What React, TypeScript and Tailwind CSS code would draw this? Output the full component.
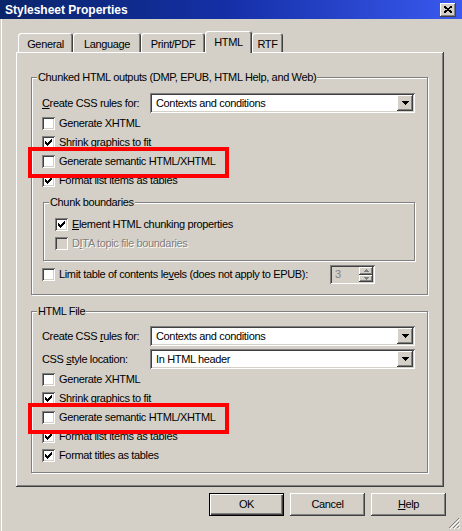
import React from "react";

const RAISED =
  "shadow-[inset_-1px_-1px_#404040,inset_1px_1px_#ffffff,inset_-2px_-2px_#808080]";
const SUNKEN =
  "shadow-[inset_1px_1px_#808080,inset_-1px_-1px_#ffffff,inset_2px_2px_#404040,inset_-2px_-2px_#d4d0c8]";
const ETCHED =
  "border border-[#808080] shadow-[inset_1px_1px_0_#ffffff,1px_1px_0_#ffffff]";

function Check({ checked, disabled }: { checked?: boolean; disabled?: boolean }) {
  return (
    <span
      className={
        "relative block h-[13px] w-[13px] shrink-0 " +
        (disabled ? "bg-[#d4d0c8] " : "bg-white ") +
        SUNKEN
      }
    >
      {checked && (
        <svg
          className="absolute left-0 top-0"
          width="13"
          height="13"
          viewBox="0 0 13 13"
          shapeRendering="crispEdges"
        >
          <path d="M3 5 L3 8 L5 10 L10 5 L10 2 L5 7 Z" fill="#000" />
        </svg>
      )}
    </span>
  );
}

function Row({
  checked,
  disabled,
  mark,
  children,
}: {
  checked?: boolean;
  disabled?: boolean;
  mark?: boolean;
  children: React.ReactNode;
}) {
  return (
    <div className="relative flex h-[19px] items-center gap-[4px]">
      <Check checked={checked} disabled={disabled} />
      <span
        className={
          disabled ? "text-[#808080] [text-shadow:1px_1px_0_#ffffff]" : ""
        }
      >
        {children}
      </span>
      {mark && (
        <div className="pointer-events-none absolute left-[-14px] top-[-5px] z-10 h-[31px] w-[201px] border-[4px] border-[#ff0000]" />
      )}
    </div>
  );
}

function Combo({ value }: { value: string }) {
  return (
    <div className={"flex h-[20px] w-[265px] items-center bg-white " + SUNKEN}>
      <span className="flex-1 pl-[6px]">{value}</span>
      <div
        className={
          "mr-[2px] flex h-[16px] w-[16px] items-center justify-center bg-[#d4d0c8] " +
          RAISED
        }
      >
        <svg width="7" height="4" viewBox="0 0 7 4" shapeRendering="crispEdges">
          <path d="M0 0 H7 L3.5 4 Z" fill="#000" />
        </svg>
      </div>
    </div>
  );
}

function U({ children }: { children: React.ReactNode }) {
  return <span className="underline underline-offset-[1px]">{children}</span>;
}

function Tab({
  label,
  w,
  selected,
}: {
  label: string;
  w: string;
  selected?: boolean;
}) {
  return (
    <div
      className={
        (selected
          ? "relative z-10 -mb-[1px] h-[22px] pt-[5px] "
          : "h-[19px] pt-[5px] ") +
        w +
        " flex items-start justify-center rounded-t-[3px] bg-[#d4d0c8] leading-[12px] shadow-[inset_1px_1px_#ffffff,inset_-1px_0_#404040,inset_-2px_0_#808080]"
      }
    >
      {label}
    </div>
  );
}

function Btn({
  children,
  def,
}: {
  children: React.ReactNode;
  def?: boolean;
}) {
  return (
    <div
      className={
        "flex h-[23px] w-[75px] items-center justify-center bg-[#d4d0c8] " +
        (def
          ? "shadow-[inset_0_0_0_1px_#000000,inset_2px_2px_#ffffff,inset_-2px_-2px_#404040,inset_-3px_-3px_#808080]"
          : RAISED)
      }
    >
      {children}
    </div>
  );
}

export default function App() {
  return (
    <div className="relative h-[531px] w-[462px] overflow-hidden bg-[#d4d0c8] font-['Liberation_Sans',Arial,sans-serif] text-[11px] tracking-[-0.35px] text-black shadow-[inset_1px_0_#d4d0c8,inset_2px_0_#ffffff]">
      {/* Title bar */}
      <div className="flex h-[19px] items-center justify-between bg-linear-to-r from-[#0a246a] via-[#1530a8] to-[#3a5af0] pl-[5px] pr-[6px]">
        <span className="text-[12px] font-bold tracking-normal text-white">
          Stylesheet Properties
        </span>
        <div
          className={
            "flex h-[14px] w-[16px] items-center justify-center bg-[#d4d0c8] " +
            RAISED
          }
        >
          <svg width="8" height="7" viewBox="0 0 8 7" shapeRendering="crispEdges">
            <path d="M0 0 L8 7 M8 0 L0 7" stroke="#000" strokeWidth="1.8" />
          </svg>
        </div>
      </div>

      {/* Tabs */}
      <div className="ml-[18px] mt-[12px] flex h-[21px] items-end">
        <Tab label="General" w="w-[55px]" />
        <Tab label="Language" w="w-[68px]" />
        <Tab label="Print/PDF" w="w-[64px]" />
        <Tab label="HTML" w="w-[47px]" selected />
        <Tab label="RTF" w="w-[31px]" />
      </div>

      {/* Tab page */}
      <div className={"ml-[16px] h-[435px] w-[428px] pl-[15px] pt-[25px] " + RAISED}>
        {/* Group 1 */}
        <div className={"relative w-[397px] pb-[10px] pl-[10px] pt-[15px] " + ETCHED}>
          <span className="absolute left-[5px] top-[-7px] bg-[#d4d0c8] px-[1px] leading-[12px]">
            Chunked HTML outputs (DMP, EPUB, HTML Help, and Web)
          </span>
          <div className="flex h-[20px] items-center">
            <span className="w-[108px]">
              <U>C</U>reate CSS rules for:
            </span>
            <Combo value="Contexts and conditions" />
          </div>
          <div className="mt-[1px]">
            <Row>Generate XHTML</Row>
            <Row checked>Shrink graphics to fit</Row>
            <Row mark>Generate semantic HTML/XHTML</Row>
            <Row checked>Format list items as tables</Row>
          </div>

          {/* Chunk boundaries */}
          <div className={"relative ml-[1px] mt-[12px] w-[372px] pb-[7px] pl-[11px] pt-[12px] " + ETCHED}>
            <span className="absolute left-[5px] top-[-7px] bg-[#d4d0c8] px-[1px] leading-[12px]">
              Chunk boundaries
            </span>
            <Row checked>
              <U>E</U>lement HTML chunking properties
            </Row>
            <Row disabled>
              D<U>I</U>TA topic file boundaries
            </Row>
          </div>

          <div className="mt-[3px] flex h-[20px] items-center">
            <Check />
            <span className="ml-[4px] w-[271px]">
              Limit table of contents le<U>v</U>els (does not apply to EPUB):
            </span>
            <div className={"flex h-[19px] w-[45px] items-center bg-[#d4d0c8] " + SUNKEN}>
              <span className="flex-1 pl-[5px] text-[#808080]">3</span>
              <div className="mr-[2px] flex flex-col">
                <div className={"flex h-[8px] w-[14px] items-center justify-center " + RAISED}>
                  <svg width="5" height="3" viewBox="0 0 5 3" shapeRendering="crispEdges">
                    <path d="M2.5 0 L5 3 H0 Z" fill="#808080" />
                  </svg>
                </div>
                <div className={"flex h-[7px] w-[14px] items-center justify-center " + RAISED}>
                  <svg width="5" height="3" viewBox="0 0 5 3" shapeRendering="crispEdges">
                    <path d="M0 0 H5 L2.5 3 Z" fill="#808080" />
                  </svg>
                </div>
              </div>
            </div>
          </div>
        </div>

        {/* Group 2 */}
        <div className={"relative mt-[16px] w-[397px] pb-[7px] pl-[10px] pt-[14px] " + ETCHED}>
          <span className="absolute left-[5px] top-[-7px] bg-[#d4d0c8] px-[1px] leading-[12px]">
            HTML File
          </span>
          <div className="flex h-[20px] items-center">
            <span className="w-[108px]">
              Create CSS <U>r</U>ules for:
            </span>
            <Combo value="Contexts and conditions" />
          </div>
          <div className="mt-[3px] flex h-[20px] items-center">
            <span className="w-[108px]">
              CSS <U>s</U>tyle location:
            </span>
            <Combo value="In HTML header" />
          </div>
          <div className="mt-[1px]">
            <Row>Generate XHTML</Row>
            <Row checked>Shrink graphics to fit</Row>
            <Row mark>Generate semantic HTML/XHTML</Row>
            <Row checked>Format list items as tables</Row>
            <Row checked>Format titles as tables</Row>
          </div>
        </div>
      </div>

      {/* Buttons */}
      <div className="mt-[6px] flex justify-end gap-[6px] pr-[16px]">
        <Btn def>OK</Btn>
        <Btn>Cancel</Btn>
        <Btn>
          <U>H</U>elp
        </Btn>
      </div>

      {/* Size grip */}
      <svg
        className="absolute bottom-[2px] right-[2px]"
        width="12"
        height="12"
        viewBox="0 0 12 12"
      >
        <path d="M11 1 L1 11 M11 5 L5 11 M11 9 L9 11" stroke="#808080" strokeWidth="1" />
        <path d="M12 2 L2 12 M12 6 L6 12 M12 10 L10 12" stroke="#ffffff" strokeWidth="1" />
      </svg>
    </div>
  );
}
